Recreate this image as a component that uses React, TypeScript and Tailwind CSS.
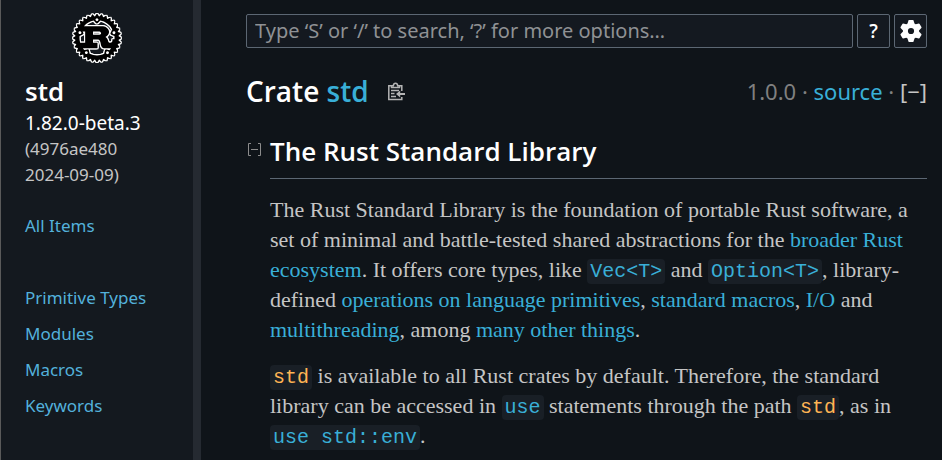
import { SiRust } from "react-icons/si";
import type { ReactNode } from "react";

function Code({ children, link = false }: { children: ReactNode; link?: boolean }) {
  const code = (
    <code
      className={`rounded bg-[#191f26] px-[3px] py-px font-['Liberation_Mono',monospace] text-[20px] leading-none ${
        link ? "text-[#39afd7]" : "text-[#ffb454]"
      }`}
    >
      {children}
    </code>
  );
  return link ? <a href="#item">{code}</a> : code;
}

function Link({ children }: { children: ReactNode }) {
  return (
    <a href="#doc" className="text-[#39afd7]">
      {children}
    </a>
  );
}

function GearIcon() {
  return (
    <svg viewBox="0 0 24 24" className="size-6 shrink-0" fill="currentColor">
      <circle cx="12" cy="12" r="5.600" fill="none" stroke="currentColor" strokeWidth="5" />
      {[0, 60, 120, 180, 240, 300].map((angle) => (
        <path key={angle} transform={`rotate(${angle} 12 12)`} d="M8.200 5.500 9.500 1.500Q9.700 1 10.200 1h3.600q.5 0 .7.5l1.300 4z" />
      ))}
    </svg>
  );
}

function ClipboardIcon() {
  return (
    <svg viewBox="0 0 18 19" className="h-[19px] w-[18px]" fill="none" stroke="#b4b4b4" strokeWidth="1.5">
      <path d="M5 3.700H1.800v13.800h13v-2.500M14.800 9V3.700H12M4.500 5.600V3.800h1.800C6.500 2 7.300 1.200 8.500 1.200s2 .8 2.200 2.600h1.800v1.800z" />
      <path d="M4 8.500h8M4 11.500h3.500M4 14.500h5" strokeWidth="1.3" />
      <path d="M18 12h-6" strokeWidth="2" />
      <path d="M13.200 8.600v6.800L9 12z" fill="#b4b4b4" stroke="none" />
    </svg>
  );
}

function Sidebar() {
  const sections = ["Primitive Types", "Modules", "Macros", "Keywords"];
  return (
    <nav
      aria-label="Crate"
      className="w-[201px] shrink-0 border-r-8 border-l border-r-[#252a31] border-l-[#5a5a5a] bg-[#14191f] pt-[13px] pl-6"
    >
      <a href="#home" aria-label="Rust" className="mr-6 flex h-[50px] items-center justify-center">
        <SiRust className="size-12 text-black [filter:drop-shadow(1px_0_0_#fff)_drop-shadow(0_1px_0_#fff)_drop-shadow(-1px_0_0_#fff)_drop-shadow(0_-1px_0_#fff)]" />
      </a>
      <h2 className="mt-3 font-['Open_Sans',sans-serif] text-[26px] leading-8 font-semibold text-white">std</h2>
      <div className="mt-[3px] text-[19px] leading-[26px] text-white">1.82.0-beta.3</div>
      <div className="text-[17px] leading-[26px] text-[#c5c5c5]">
        (4976ae480
        <br />
        2024-09-09)
      </div>
      <ul className="mt-5 text-[17px] leading-9 text-[#53b1db]">
        <li className="mb-9">
          <a href="#all">All Items</a>
        </li>
        {sections.map((s) => (
          <li key={s}>
            <a href="#section">{s}</a>
          </li>
        ))}
      </ul>
    </nav>
  );
}

export default function App() {
  return (
    <div className="flex h-screen overflow-hidden bg-[#0f1419] font-['Noto_Sans',sans-serif] text-[#c5c5c5]">
      <Sidebar />
      <main className="min-w-0 flex-1 pt-[14px] pr-[15px] pl-[45px]">
        <form className="flex h-[34px] gap-1">
          <input
            type="search"
            aria-label="Search"
            placeholder="Type ‘S’ or ‘/’ to search, ‘?’ for more options…"
            className="min-w-0 flex-1 rounded-xs border border-[#5c6773] bg-[#141920] px-2 text-[20px] placeholder:text-[#8f9194]"
          />
          <button type="button" className="w-[33px] rounded-xs border border-[#5c6773] bg-[#141920] font-['Open_Sans',sans-serif] text-[19px] leading-8 font-semibold text-white">
            ?
          </button>
          <button
            type="button"
            aria-label="Settings"
            className="flex w-[33px] items-center justify-center rounded-xs border border-[#5c6773] bg-[#141920] text-white"
          >
            <GearIcon />
          </button>
        </form>

        <div className="mt-[23px] flex h-10 items-center">
          <h1 className="font-['Open_Sans',sans-serif] text-[28px] font-semibold text-white">
            Crate <a href="#std" className="text-[#39afd7]">std</a>
          </h1>
          <button type="button" aria-label="Copy item path" className="ml-[18px]">
            <ClipboardIcon />
          </button>
          <div className="ml-auto text-[22px] whitespace-nowrap text-[#808080]">
            1.0.0 · <Link>source</Link> · <button type="button" className="text-[#c5c5c5]">[−]</button>
          </div>
        </div>

        <details open className="mt-[19px]">
          <summary className="flex list-none">
            <svg viewBox="0 0 15 15" className="mt-3 mr-2 ml-px size-[15px] shrink-0" fill="none" stroke="#8c8c8c">
              <path d="M4 1.500H1.500v12H4M11 1.500h2.500v12H11M4 7.500h7" />
            </svg>
            <h2 className="h-[49px] flex-1 border-b border-[#5c6773] font-['Open_Sans',sans-serif] text-[26px] leading-[42px] font-semibold text-white">
              The Rust Standard Library
            </h2>
          </summary>
          <div className="ml-6 font-['Liberation_Serif',serif] text-[22px] leading-[30px]">
            <p className="mt-4">
              The Rust Standard Library is the foundation of portable Rust software, a<br />
              set of minimal and battle-tested shared abstractions for the <Link>broader Rust<br />
              ecosystem</Link>. It offers core types, like <Code link>Vec&lt;T&gt;</Code> and <Code link>Option&lt;T&gt;</Code>, library-<br />
              defined <Link>operations on language primitives</Link>, <Link>standard macros</Link>, <Link>I/O</Link> and<br />
              <Link>multithreading</Link>, among <Link>many other things</Link>.
            </p>
            <p className="mt-4">
              <Code>std</Code> is available to all Rust crates by default. Therefore, the standard<br />
              library can be accessed in <Code link>use</Code> statements through the path <Code>std</Code>, as in<br />
              <Code link>use std::env</Code>.
            </p>
          </div>
        </details>
      </main>
    </div>
  );
}
